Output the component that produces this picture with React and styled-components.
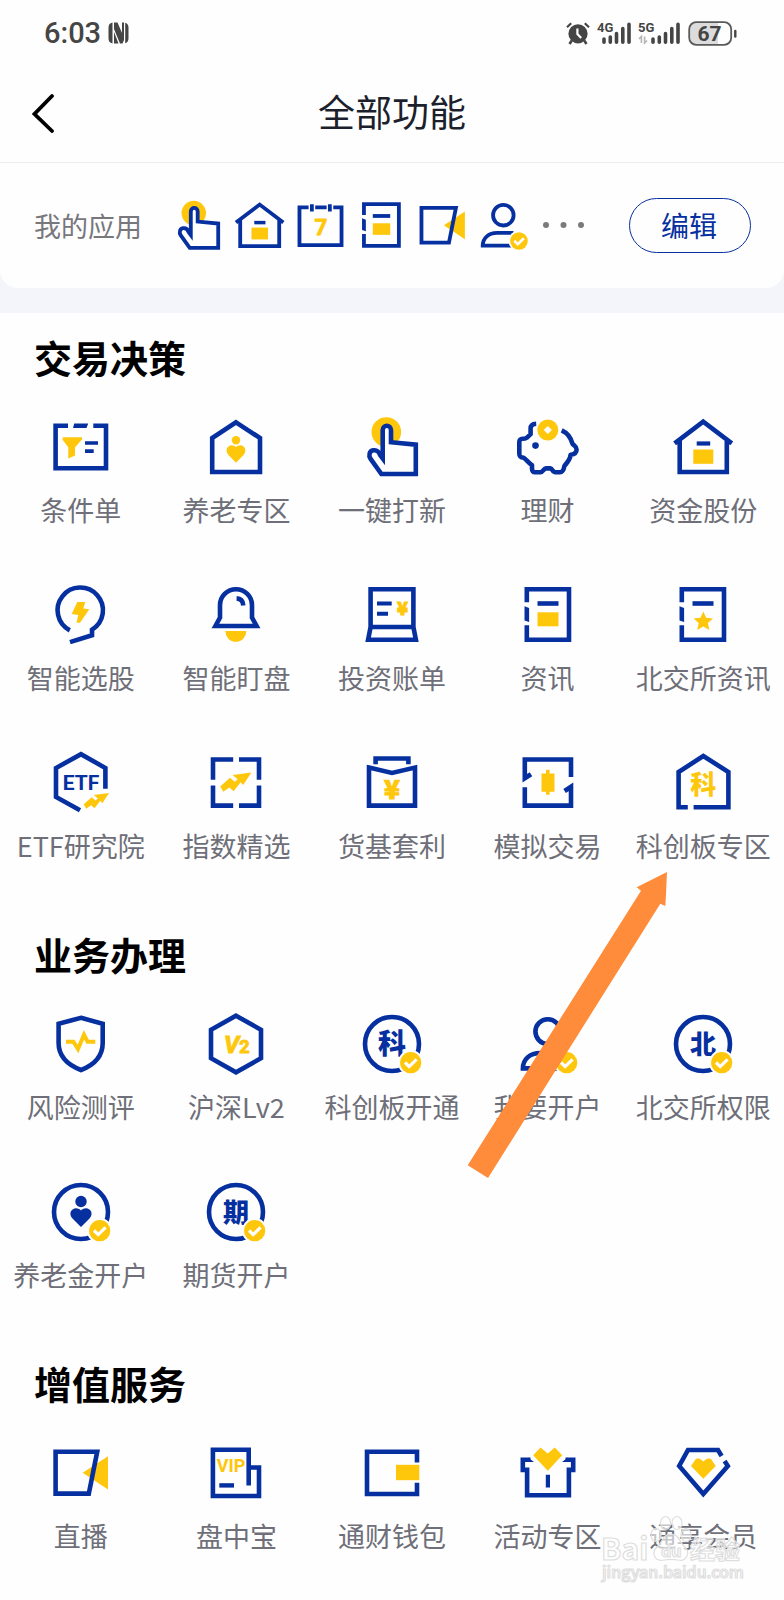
import styled, { createGlobalStyle } from "styled-components";

const BLUE = "#06309f";
const YELLOW = "#fec70b";
const CJK = '"Noto Sans CJK SC", "Noto Sans", sans-serif';

const GlobalStyle = createGlobalStyle`
  * {
    box-sizing: border-box;
  }

  body {
    margin: 0;
    background-color: #fefefe;
    font-family: ${CJK};
  }
`;

const Page = styled.div`
  position: relative;
  min-height: 100vh;
  overflow: hidden;
`;

const StatusBar = styled.div`
  display: flex;
  align-items: center;
  justify-content: space-between;
  height: 62px;
  padding: 4px 47px 0 44px;
  color: #454545;
`;

const StatusGroup = styled.div`
  display: flex;
  align-items: center;
  gap: 7px;
`;

const Time = styled.span`
  font-family: Roboto, sans-serif;
  font-size: 29px;
  font-weight: 500;
`;

const Header = styled.header`
  display: grid;
  grid-template-columns: 60px 1fr 60px;
  align-items: center;
  height: 101px;
  padding-bottom: 2px;
  border-bottom: 1px solid #ededed;
`;

const BackButton = styled.button`
  display: flex;
  justify-content: flex-end;
  padding: 4px 4px 0 0;
  border: none;
  background: none;
  cursor: pointer;
`;

const Title = styled.h1`
  margin: 0;
  color: #1c1f2c;
  font-size: 37px;
  font-weight: 400;
  line-height: 52px;
  text-align: center;
`;

const MyAppsWrap = styled.div`
  padding-bottom: 25px;
  background-color: #f4f5fa;
`;

const MyApps = styled.section`
  display: flex;
  align-items: center;
  padding: 35px 33px 35px 34px;
  border-radius: 0 0 18px 18px;
  background-color: #fefefe;
`;

const MyAppsLabel = styled.h2`
  margin: 0;
  color: #77777c;
  font-size: 27px;
  font-weight: 400;
  line-height: 40px;
`;

const MyAppsIcons = styled.div`
  display: flex;
  flex: 1;
  align-items: center;
  gap: 8px;
  margin-left: 30px;
`;

const EditButton = styled.button`
  width: 122px;
  height: 55px;
  padding: 0 2px 2px 0;
  border: 1px solid ${BLUE};
  border-radius: 28px;
  background: none;
  color: ${BLUE};
  font-family: inherit;
  font-size: 28px;
  cursor: pointer;
`;

const Section = styled.section`
  padding: 16px 3px 44px;
`;

const SectionTitle = styled.h2`
  margin: 0 31px 30px;
  color: #000;
  font-size: 38px;
  font-weight: 700;
  line-height: 56px;
`;

const Grid = styled.div`
  display: grid;
  grid-template-columns: repeat(5, 1fr);
  row-gap: 53px;
`;

const Item = styled.a`
  display: flex;
  flex-direction: column;
  align-items: center;
  gap: 10px;
  color: #6e6f78;
  font-size: 27px;
  line-height: 41px;
  text-decoration: none;
  white-space: nowrap;
`;

const IconSvg = styled.svg`
  display: block;
  flex: none;
  width: ${(props) => props.$size}px;
  height: ${(props) => props.$size}px;
  fill: none;
  stroke: none;
  overflow: visible;

  .line {
    stroke: ${BLUE};
    stroke-width: 4.6;
  }

  .blue {
    fill: ${BLUE};
  }

  .yellow {
    fill: ${YELLOW};
  }

  .heavy {
    stroke: ${YELLOW};
    stroke-width: 1;
  }

  text {
    font-family: ${CJK};
    font-weight: 900;
    text-anchor: middle;
  }

  .latin {
    font-family: Roboto, sans-serif;
    font-weight: 700;
  }
`;

const Arrow = styled.svg`
  position: absolute;
  top: 872px;
  left: 467px;
  width: 201px;
  height: 307px;
  pointer-events: none;
`;

const Watermark = styled.svg`
  position: absolute;
  right: 40px;
  bottom: 14px;
  width: 144px;
  height: 72px;
  pointer-events: none;
  fill: rgba(255, 255, 255, 0.6);
  stroke: #dedede;
  stroke-width: 1.2;
  font-family: ${CJK};
`;

const CheckBadge = () => (
  <>
    <circle cx="50.7" cy="50.7" r="12.6" fill="#fefefe" />
    <circle className="yellow" cx="50.7" cy="50.7" r="10.6" />
    <path d="M45 50.5L49.2 54.6L56.6 47.4" stroke="#fefefe" strokeWidth="3.2" />
  </>
);

const TrendArrow = () => (
  <path
    className="yellow"
    d="M16.2 35.5L26 26.8L30.8 30.8L33.6 28.2L28.6 24L47.4 21.6L39.2 34L36.6 31.2L29.6 40.2L25.3 36.6L19.3 40.8Z"
  />
);

const Ring = ({ children }) => (
  <>
    <circle className="line" cx="32" cy="32" r="27" />
    {children}
    <CheckBadge />
  </>
);

const NoteFrame = () => (
  <>
    <path className="line" d="M10.8 19.2V6.3H53V56.7H10.8V42.2" />
    <path className="blue" d="M8.5 23.3L13.1 25V39L8.5 37.5Z" />
    <path className="blue" d="M21.5 18.2H42.5V22.8H21.5Z" />
  </>
);

const icons = {
  condition: (
    <>
      <path className="line" d="M19 10.8H6.6V53.2H57V10.8H44.3" />
      <path className="blue" d="M25.2 8.5H39.2L37.5 13.1H24ZM36 26.2H49V29.8H36ZM36 34.2H44.7V37.9H36Z" />
      <path className="yellow" d="M13.7 22.2H33V24.6L26 32.2V40.5L19.3 43.5V32.2L13.7 25Z" />
    </>
  ),
  pension: (
    <>
      <path className="line" d="M32 7.3L56 23V57H8.2V23Z" />
      <circle className="yellow" cx="32" cy="25.2" r="4.2" />
      <path
        className="yellow"
        d="M32 47.8L24.5 40C20.5 35.5 23.5 30.3 27.5 30.3C29.5 30.3 31 31 32 32.2C33 31 34.5 30.3 36.5 30.3C40.5 30.3 43.5 35.5 39.5 40Z"
      />
    </>
  ),
  tap: (
    <>
      <circle className="yellow" cx="26.3" cy="17" r="14.8" />
      <path
        className="line"
        fill="#fefefe"
        d="M22.7 43.5V15C22.7 9.4 31 9.4 31 15V27.2L55.8 29.6V59H21.4L10.6 43.8C8.3 40.5 9.3 36 13.3 35.3C17 34.8 19.3 37.5 20.2 40.2L22.7 43.5V33"
      />
    </>
  ),
  piggy: (
    <>
      <path
        className="line"
        strokeLinejoin="round"
        d="M20.2 8.8C16.5 9 14.6 11 14.6 13.5V19.2L11 22.6C9.4 23.6 8 23.8 6.4 23.8C4.6 23.8 3.3 25 3.3 27V38.5C3.3 41.5 4.5 42.6 7.8 42.8C10.5 44.6 12.5 47.8 16 50.2V53.5C16 56.2 17 57.2 19.3 57.2H24.5C27.3 57.2 27.5 53.4 30 53.4H34.4C36.5 53.4 36 57.2 39.5 57.2H44C46.6 57.2 47.8 54.8 48.4 51C51.5 47.5 54.2 44.5 54.6 39.8C58.4 39.2 60.6 37.3 60.6 34.4C60.6 31.5 58.4 30.8 56.5 28.8C55 22.8 50.5 17.5 45.7 15.3"
      />
      <circle className="yellow" cx="31.8" cy="15" r="10.5" />
      <path fill="#fefefe" d="M31.8 10.9L35.9 15L31.8 19.1L27.7 15Z" />
      <circle className="blue" cx="19.5" cy="30.6" r="3.3" />
    </>
  ),
  house: (
    <>
      <path className="line" d="M3.6 28.4L32.2 6.7L60.8 28.4M8.7 25V57H55.8V25" />
      <path className="blue" d="M25.7 26.4H39.2V30.6H25.7Z" />
      <path className="yellow" d="M22.3 34.5H42.3V48.8H22.3Z" />
    </>
  ),
  bulb: (
    <>
      <path className="line" d="M20.8 47.4A22.7 22.7 0 1 1 43 46.7V52.3L21 59.1" />
      <path className="yellow" d="M28.3 19H36.3L34.3 25.5L40.3 26.3L31 39.7H27.5L29.3 32L22.7 31Z" />
    </>
  ),
  bell: (
    <>
      <path className="line" d="M11.4 43L16 34.6V22.3A16 16 0 0 1 48 22.3V34.6L52.6 43Z" />
      <path className="line" d="M32.6 15.4C36.5 15.6 39 18.3 39.3 22.5" />
      <path className="yellow" d="M21.3 48H42.3A10.5 10.8 0 0 1 21.3 48Z" />
    </>
  ),
  bill: (
    <>
      <path className="line" d="M10.6 44V6.3H53.4V44ZM10.6 44L8.1 56.8H55.9L53.4 44" />
      <path className="blue" d="M17 18.4H31.7V22.4H17ZM17 28.8H28V32.8H17Z" />
      <text className="yellow heavy" x="42.5" y="32" fontSize="18">¥</text>
    </>
  ),
  news: (
    <>
      <NoteFrame />
      <path className="yellow" d="M21.5 29.3H42.5V43.3H21.5Z" />
    </>
  ),
  starNews: (
    <>
      <NoteFrame />
      <path
        className="yellow"
        d="M32.3 28.5L35.2 34.8L42 35.5L36.9 40.1L38.4 47L32.3 43.5L26.2 47L27.7 40.1L22.6 35.5L29.4 34.8Z"
      />
    </>
  ),
  etf: (
    <>
      <path className="line" d="M56.4 37.8V17L32 3.2L7 17V46L31 59.3" />
      <text className="blue latin" x="32" y="39" fontSize="21">ETF</text>
      <g transform="translate(21.6 24.6) scale(0.81)">
        <TrendArrow />
      </g>
    </>
  ),
  index: (
    <>
      <path className="line" d="M29.2 8.5H9V28.8M35 8.5H55V28.8M9 34.5V54.6H29.2M35 54.6H55V34.5" />
      <TrendArrow />
    </>
  ),
  fund: (
    <>
      <path className="line" d="M9 16.6L32 22L55 16.6V54.6H9Z" />
      <path className="line" d="M15.6 13.2V7.5H48.4V13.2" />
      <text className="yellow heavy" x="32" y="47.5" fontSize="26">¥</text>
    </>
  ),
  simulate: (
    <>
      <path className="line" d="M15 23.2L8.8 27.2V8.5H55V26M8.8 36.2V54.6H55V35.8L48.6 40" />
      <path className="yellow" d="M25.5 22.5H30V18.8H33.6V22.5H38.5V40.8H33.6V43.8H30V40.8H25.5Z" />
    </>
  ),
  starBoard: (
    <>
      <path className="line" d="M16.8 56.2H7.6V21L32.3 5L57.4 21V56.2H22.6" />
      <text className="yellow" x="32.3" y="43" fontSize="26">科</text>
    </>
  ),
  shield: (
    <>
      <path className="line" d="M32 5.8L53.7 11.8V31C53.7 44 45 53 32 58C19 53 9.6 44 9.6 31V11.8Z" />
      <path d="M17 29.7H24.4L29 37L35 22.8L38.6 29.7H46.3" stroke={YELLOW} strokeWidth="4" />
    </>
  ),
  level2: (
    <>
      <path className="line" d="M32 3.7L57 17.8V46.2L32 60.3L7 46.2V17.8Z" />
      <text className="yellow latin heavy" x="27.5" y="40.5" fontSize="24" fontStyle="italic">V</text>
      <text className="yellow latin heavy" x="40.5" y="40.5" fontSize="18">2</text>
    </>
  ),
  openStar: (
    <Ring>
      <text className="blue" x="32" y="42" fontSize="28">科</text>
    </Ring>
  ),
  account: (
    <>
      <circle className="line" cx="31.8" cy="19.6" r="12.4" />
      <path className="line" d="M44 41H24.5C13.5 41 6.9 47.5 6.9 56.4H42" />
      <CheckBadge />
    </>
  ),
  openNorth: (
    <Ring>
      <text className="blue" x="32" y="41.5" fontSize="26">北</text>
    </Ring>
  ),
  pensionAccount: (
    <Ring>
      <circle className="blue" cx="32" cy="21.5" r="5.7" />
      <path
        className="blue"
        d="M32 47L23.5 38.6C19 33.5 22.5 28.2 27 28.2C29.3 28.2 31 29.2 32 30.4C33 29.2 34.7 28.2 37 28.2C41.5 28.2 45 33.5 40.5 38.6Z"
      />
    </Ring>
  ),
  futures: (
    <Ring>
      <text className="blue" x="32" y="42" fontSize="26">期</text>
    </Ring>
  ),
  live: (
    <>
      <path className="yellow" d="M33.7 31.8L59 15.2V48.5Z" />
      <path className="line" d="M6.6 10.8H48.2L39.8 52.6H6.6Z" />
    </>
  ),
  vip: (
    <>
      <path className="line" d="M44.7 44.5V8.8H8.9V55H55V26.5H46" />
      <text className="yellow latin" x="27" y="30.5" fontSize="18">VIP</text>
      <path className="blue" d="M15.3 42.2H30V46.6H15.3Z" />
    </>
  ),
  wallet: (
    <>
      <path className="line" d="M57 21.5V10.8H7V53H57V41.8" />
      <path className="yellow" d="M36 23.8H59.3V39.2H36Z" />
    </>
  ),
  gift: (
    <>
      <path className="line" d="M14.5 18.8H6.8V28.9H11.1V54.2H52.9V28.9H57.2V18.8H49.5" />
      <path className="blue" d="M12 16.5L18 21.1H12ZM52 16.5L46 21.1H52ZM29.8 33.8H34V46.6H29.8Z" />
      <path className="yellow" d="M17.2 14.2L24.5 6.5L31.8 12.5L38.8 6.5L46.2 14.2L31.8 29.8Z" />
    </>
  ),
  diamond: (
    <>
      <path className="line" d="M50.6 15L47 9H17L8.2 25L32.3 53L56.8 25L53.6 20" />
      <path
        className="yellow"
        d="M20 25L24.8 18C26.6 17.3 28.4 17.4 29.6 18.3L32.3 20.6L35.2 18.3C36.4 17.4 38.2 17.3 40 18L44.7 25L32.3 37.8Z"
      />
    </>
  ),
  calendar: (
    <>
      <path className="line" d="M17.6 10H6.6V55.7H57.4V10H47.4M25.6 10H39.4M21.6 6.4V15M43.3 6.4V15" />
      <text className="yellow latin heavy" x="32.5" y="44" fontSize="27">7</text>
    </>
  ),
};

const Icon = ({ name, size = 64 }) => (
  <IconSvg $size={size} viewBox="0 0 64 64" aria-hidden="true">
    {icons[name]}
  </IconSvg>
);

const myApps = ["tap", "house", "calendar", "news", "live", "account"];

const sections = [
  {
    title: "交易决策",
    items: [
      ["condition", "条件单"],
      ["pension", "养老专区"],
      ["tap", "一键打新"],
      ["piggy", "理财"],
      ["house", "资金股份"],
      ["bulb", "智能选股"],
      ["bell", "智能盯盘"],
      ["bill", "投资账单"],
      ["news", "资讯"],
      ["starNews", "北交所资讯"],
      ["etf", "ETF研究院"],
      ["index", "指数精选"],
      ["fund", "货基套利"],
      ["simulate", "模拟交易"],
      ["starBoard", "科创板专区"],
    ],
  },
  {
    title: "业务办理",
    items: [
      ["shield", "风险测评"],
      ["level2", "沪深Lv2"],
      ["openStar", "科创板开通"],
      ["account", "我要开户"],
      ["openNorth", "北交所权限"],
      ["pensionAccount", "养老金开户"],
      ["futures", "期货开户"],
    ],
  },
  {
    title: "增值服务",
    items: [
      ["live", "直播"],
      ["vip", "盘中宝"],
      ["wallet", "通财钱包"],
      ["gift", "活动专区"],
      ["diamond", "通享会员"],
    ],
  },
];

const NfcIcon = () => (
  <svg width="21" height="22" viewBox="0 0 21 22" fill="#454545" aria-hidden="true">
    <path d="M4.5 0.5C1.5 1 0.5 3 0.5 6V16C0.5 19 1.5 21 4.5 21.5V0.5Z" />
    <path d="M6 0.5H9.5L14 11V0.5L16 0.6V18L14.5 21.5H12L6 7Z" />
    <path d="M6 10L10.5 21.5H6Z" />
    <path d="M17.2 0.8C19.8 1.5 20.5 3.5 20.5 6V16C20.5 18.5 19.8 20.5 17.2 21.2Z" />
  </svg>
);

const AlarmIcon = () => (
  <svg width="24" height="23" viewBox="0 0 24 23" fill="none" stroke="#454545" aria-hidden="true">
    <circle cx="12" cy="11.8" r="9.6" fill="#454545" stroke="none" />
    <path d="M1 5.2L5.2 1.2M23 5.2L18.8 1.2" strokeWidth="2.2" />
    <path d="M5.8 18.5L3.5 22M18.2 18.5L20.5 22" strokeWidth="2.6" />
    <path d="M11.4 6.5V12L15.2 16" stroke="#fff" strokeWidth="2.2" />
  </svg>
);

const BARS = "M2 18V21.3M8.3 16V21.3M14.5 12.6V21.3M20.8 7.6V21.3M27 3.2V21.3";

const Signal4G = () => (
  <svg width="34" height="24" viewBox="0 0 34 24" fill="#454545" aria-hidden="true">
    <text x="0" y="11" fontFamily="Roboto, sans-serif" fontSize="13" fontWeight="700">4G</text>
    <g transform="translate(5 0)">
      <path d={BARS} stroke="#454545" strokeWidth="3.6" strokeLinecap="round" />
    </g>
  </svg>
);

const Signal5G = () => (
  <svg width="43" height="24" viewBox="0 0 43 24" fill="#454545" aria-hidden="true">
    <text x="0" y="11" fontFamily="Roboto, sans-serif" fontSize="13" fontWeight="700">5G</text>
    <path d="M1 18L3.4 15.5V22M6.6 15.5V22L9 19.5" fill="none" stroke="#b5b5b5" strokeWidth="1.6" />
    <g transform="translate(13 0)">
      <path d={BARS} stroke="#454545" strokeWidth="3.6" strokeLinecap="round" />
    </g>
  </svg>
);

const BatteryIcon = () => (
  <svg width="49" height="25" viewBox="0 0 49 25" aria-hidden="true">
    <path d="M8 2H30V23H8C4 23 2 21 2 17V8C2 4 4 2 8 2Z" fill="#dcdcdc" />
    <rect x="1.2" y="1.2" width="42" height="22.6" rx="7" fill="none" stroke="#5a5a5a" strokeWidth="1.8" />
    <path d="M47.3 10V15.5" stroke="#454545" strokeWidth="2.4" strokeLinecap="round" />
    <text
      x="21.5"
      y="19.8"
      fill="#454545"
      fontFamily="Roboto, sans-serif"
      fontSize="21"
      fontWeight="700"
      textAnchor="middle"
    >
      67
    </text>
  </svg>
);

export default function App() {
  return (
    <Page>
      <GlobalStyle />

      <StatusBar>
        <StatusGroup>
          <Time>6:03</Time>
          <NfcIcon />
        </StatusGroup>
        <StatusGroup>
          <AlarmIcon />
          <Signal4G />
          <Signal5G />
          <BatteryIcon />
        </StatusGroup>
      </StatusBar>

      <Header>
        <BackButton aria-label="返回">
          <svg width="24" height="40" viewBox="0 0 24 40" fill="none" stroke="#000" strokeWidth="3.8" strokeLinecap="round">
            <path d="M20 3L2.5 21L20 38" />
          </svg>
        </BackButton>
        <Title>全部功能</Title>
      </Header>

      <MyAppsWrap>
        <MyApps>
          <MyAppsLabel>我的应用</MyAppsLabel>
          <MyAppsIcons>
            {myApps.map((name) => (
              <Icon key={name} name={name} size={53} />
            ))}
            <svg width="46" height="8" viewBox="0 0 46 8" fill="#7a7a7a" aria-hidden="true">
              <circle cx="8" cy="3" r="3" />
              <circle cx="25.5" cy="3" r="3" />
              <circle cx="43" cy="3" r="3" />
            </svg>
          </MyAppsIcons>
          <EditButton>编辑</EditButton>
        </MyApps>
      </MyAppsWrap>

      {sections.map((section) => (
        <Section key={section.title}>
          <SectionTitle>{section.title}</SectionTitle>
          <Grid>
            {section.items.map(([icon, label]) => (
              <Item key={label} href="#">
                <Icon name={icon} />
                {label}
              </Item>
            ))}
          </Grid>
        </Section>
      ))}

      <Arrow viewBox="0 0 201 307" aria-hidden="true">
        <path d="M200 0L169.7 15.3L174 18.7L0.7 293.3L21 306L193.3 31.7L198.3 34L199 22Z" fill="#ff8c3a" />
      </Arrow>

      <Watermark viewBox="0 0 144 72" aria-hidden="true">
        <text x="1" y="46" fontSize="30" fontWeight="700">Bai</text>
        <ellipse cx="56" cy="21" rx="5" ry="6.5" />
        <ellipse cx="65.5" cy="9" rx="5" ry="6.5" />
        <ellipse cx="77" cy="9" rx="5" ry="6.5" />
        <ellipse cx="86" cy="21" rx="5" ry="6.5" />
        <path d="M71 20C79 20 79 28 85 33C91 39 86 48 78 46C73 45 69 45 64 46C54 48 51 38 57 33C63 28 63 20 71 20Z" />
        <text x="61" y="43" fontSize="16" fontWeight="700">du</text>
        <text x="90" y="45" fontSize="25" fontWeight="700">经验</text>
        <text x="2" y="64" fontSize="16" fontWeight="500">jingyan.baidu.com</text>
      </Watermark>
    </Page>
  );
}
